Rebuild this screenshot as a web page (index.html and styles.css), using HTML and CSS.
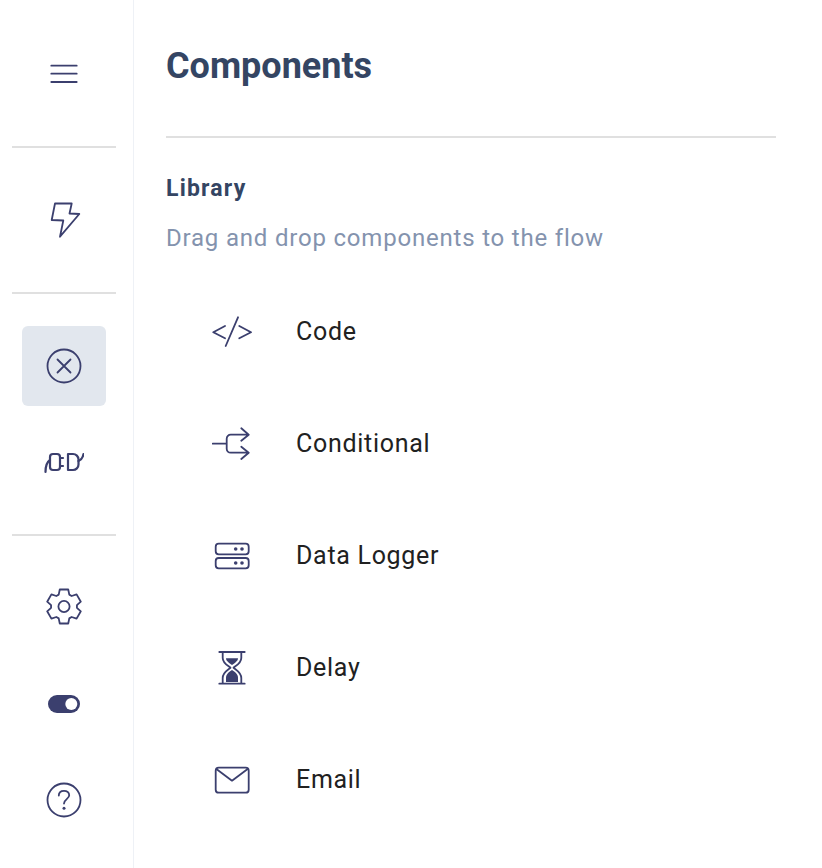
FILE: index.html
```html
<!DOCTYPE html>
<html lang="en">
<head>
    <meta charset="UTF-8">
    <meta name="viewport" content="width=device-width, initial-scale=1.0">
    <title>Components</title>
    <link rel="stylesheet" href="styles.css">
</head>
<body>
    <div class="layout">
        <nav class="sidebar">
            <div class="nav-item">
                <svg class="icon" viewBox="0 0 40 40"><path d="M7.3 11.7H32.7M7.3 19.7H32.7M7.3 28H32.7"/></svg>
            </div>
            <div class="nav-divider"></div>
            <div class="nav-item">
                <svg class="icon" viewBox="0 0 40 40"><path d="M11 3.5H27.7L25.5 13.5L35.3 14L16 36.7L19.3 20.5L7.7 20Z"/></svg>
            </div>
            <div class="nav-divider"></div>
            <div class="nav-item active">
                <svg class="icon" viewBox="0 0 40 40"><circle cx="20" cy="20" r="16.5"/><path d="M13.5 13.5L26.5 26.5M26.5 13.5L13.5 26.5"/></svg>
            </div>
            <div class="nav-item spaced">
                <svg class="icon plug" viewBox="0 0 40 40"><path d="M1.5 30C1.5 24 3 20 6 18"/><rect x="6" y="12" width="10" height="16" rx="3"/><path d="M16 16H19M16 24H19"/><path d="M24 12H29A5.5 5.5 0 0 1 34.5 17.5V22.5A5.5 5.5 0 0 1 29 28H24Z"/><path d="M34.5 19C37 18 39 15 39.5 12"/></svg>
            </div>
            <div class="nav-divider"></div>
            <div class="nav-item">
                <svg class="icon" viewBox="0 0 40 40"><g transform="translate(0 -1.5)"><path d="M15.77 3.02H24.23L25.29 8.12L27.64 9.48L32.59 7.84L36.82 15.18L32.93 18.64V21.36L36.82 24.82L32.59 32.16L27.64 30.52L25.29 31.88L24.23 36.98H15.77L14.71 31.88L12.36 30.52L7.41 32.16L3.18 24.82L7.07 21.36V18.64L3.18 15.18L7.41 7.84L12.36 9.48L14.71 8.12Z"/><circle cx="20" cy="20" r="5.6"/></g></svg>
            </div>
            <div class="nav-item spaced">
                <svg class="icon" viewBox="0 0 40 40"><rect class="solid" x="4" y="11" width="32" height="18" rx="9"/><circle class="knob" cx="27.3" cy="20" r="6"/></svg>
            </div>
            <div class="nav-item spaced">
                <svg class="icon" viewBox="0 0 40 40"><circle cx="20" cy="20" r="16.5"/><path d="M14.8 15.5C14.8 12.5 17 10.8 20 10.8C23 10.8 25.2 12.6 25.2 15.3C25.2 19 20 19.3 20 23.5"/><circle class="solid" cx="20" cy="28.3" r="1.5"/></svg>
            </div>
        </nav>

        <main class="content">
            <h1 class="title">Components</h1>
            <div class="rule"></div>
            <h2 class="subtitle">Library</h2>
            <p class="hint">Drag and drop components to the flow</p>
            <div class="components">
                <div class="component">
                    <svg class="icon" viewBox="0 0 40 40"><path d="M13 14L1.3 20.3L13 26.3M26 5.3L13.7 34M27.3 14L39 20.3L27.3 26.3"/></svg>
                    <span>Code</span>
                </div>
                <div class="component">
                    <svg class="icon" viewBox="0 0 40 40"><path d="M.7 19.7H14.7M36.7 10.7H18.7A4 4 0 0 0 14.7 14.7V24.7A4 4 0 0 0 18.7 28.7H36.7M29.3 4.3L36.7 10.7L29.3 16.7M29.3 22.7L36.7 28.7L29.3 35"/></svg>
                    <span>Conditional</span>
                </div>
                <div class="component">
                    <svg class="icon" viewBox="0 0 40 40"><rect x="3.7" y="7.7" width="33" height="10.6" rx="3"/><rect x="3.7" y="22" width="33" height="10.3" rx="3"/><circle class="solid" cx="23.7" cy="13" r="1.8"/><circle class="solid" cx="30" cy="13" r="1.8"/><circle class="solid" cx="23.7" cy="27" r="1.8"/><circle class="solid" cx="30" cy="27" r="1.8"/></svg>
                    <span>Data Logger</span>
                </div>
                <div class="component">
                    <svg class="icon" viewBox="0 0 40 40"><path d="M7.3 4H32.7M7.3 35.7H32.7M10.7 4V10C10.7 15 15 17 18.5 19.7C15 22.4 10.7 24.5 10.7 30V35.7M29.3 4V10C29.3 15 25 17 21.5 19.7C25 22.4 29.3 24.5 29.3 30V35.7"/><path class="solid" d="M14 10.3H26C26 13 23 15 20 17C17 15 14 13 14 10.3Z"/><path class="solid" d="M14 34V30C14 26 17 24 20 22C23 24 26 26 26 30V34Z"/></svg>
                    <span>Delay</span>
                </div>
                <div class="component">
                    <svg class="icon" viewBox="0 0 40 40"><rect x="3.7" y="7.7" width="33" height="25" rx="3"/><path d="M4.7 9.3L20 20.7L35.3 9.3"/></svg>
                    <span>Email</span>
                </div>
            </div>
        </main>
    </div>
</body>
</html>
```

FILE: styles.css
```css
body {
    margin: 0;
    font-family: Roboto, Arial, sans-serif;
    background-color: #fff;
}
.layout {
    display: flex;
    height: 868px;
    overflow: hidden;
}
.sidebar {
    box-sizing: border-box;
    width: 134px;
    flex-shrink: 0;
    padding: 34px 17px 0 12px;
    border-right: 1px solid #eef1f6;
}
.nav-item {
    display: flex;
    align-items: center;
    justify-content: center;
    width: 84px;
    height: 80px;
    margin-left: 10px;
    border-radius: 6px;
}
.nav-item.active {
    background-color: #e2e7ee;
}
.nav-item.spaced {
    margin-top: 16px;
}
.nav-divider {
    width: 104px;
    height: 2px;
    margin: 32px 0;
    background-color: #e0e0e0;
}
.icon {
    width: 40px;
    height: 40px;
    flex-shrink: 0;
    fill: none;
    stroke: #3b3f6e;
    stroke-width: 1.8;
    stroke-linecap: round;
    stroke-linejoin: round;
}
.icon.plug {
    stroke-width: 2.2;
}
.icon .solid {
    fill: #3b3f6e;
    stroke: none;
}
.icon .knob {
    fill: #fff;
    stroke: none;
}
.content {
    width: 610px;
    margin-left: 32px;
    padding-top: 44px;
}
.title {
    margin: 0 0 48px;
    font-size: 36px;
    line-height: 44px;
    font-weight: 700;
    color: #344563;
}
.rule {
    height: 2px;
    background-color: #e0e0e0;
}
.subtitle {
    margin: 36px 0 0;
    font-size: 23px;
    line-height: 30px;
    font-weight: 700;
    letter-spacing: 1.2px;
    color: #344563;
}
.hint {
    margin: 19px 0 0;
    font-size: 24px;
    line-height: 30px;
    letter-spacing: 0.8px;
    color: #8493ae;
}
.components {
    margin-top: 23px;
}
.component {
    display: flex;
    align-items: center;
    gap: 44px;
    height: 112px;
    padding-left: 46px;
    font-size: 25px;
    letter-spacing: 0.7px;
    color: #212121;
}
.component span {
    padding-bottom: 2px;
}
```
